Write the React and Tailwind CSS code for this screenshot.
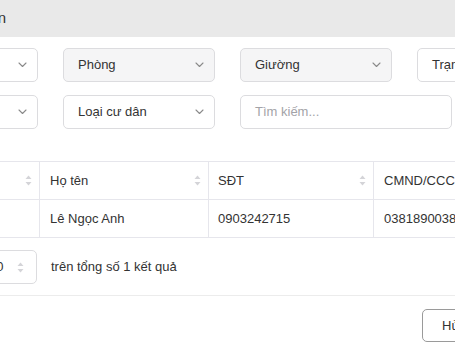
import React from 'react';

const font = { fontFamily: '"Liberation Sans", Arial, sans-serif' };

function Chevron() {
    return (
        <svg width="9" height="6" viewBox="0 0 9 6" fill="none" className="shrink-0">
            <path d="M1 1l3.5 3.5L8 1" stroke="#8a8a8a" strokeWidth="1.1" strokeLinecap="round" strokeLinejoin="round" />
        </svg>
    );
}

function SortIcon() {
    return (
        <svg width="7" height="11" viewBox="0 0 7 11" className="shrink-0">
            <path d="M3.5 0.5L6.5 4H0.5z" fill="#d4d4d8" />
            <path d="M3.5 10.5L6.5 7H0.5z" fill="#d4d4d8" />
        </svg>
    );
}

function Select({ label, disabled }) {
    return (
        <div className={`h-[34px] w-[152px] rounded-[5px] border border-[#dcdcdf] flex items-center justify-between pl-[14px] pr-[10px] text-[13px] text-[#333] ${disabled ? 'bg-[#f5f5f6]' : 'bg-white'}`}>
            <span className="whitespace-nowrap">{label}</span>
            <Chevron />
        </div>
    );
}

export default function App() {
    return (
        <div className="w-[455px] h-[356px] overflow-hidden bg-white relative" style={font}>
            {/* modal header */}
            <div className="h-[37px] bg-[#e9e9e9] flex items-center">
                <div className="-ml-[200px] w-[206px] text-right text-[15px] text-[#333] whitespace-nowrap">Danh sách cư dân</div>
            </div>

            {/* filters */}
            <div className="-ml-[114px] mt-[11px] grid grid-cols-[152px_152px_152px_152px] gap-x-[25px] gap-y-[13px]">
                <Select label="Tòa nhà" />
                <Select label="Phòng" disabled />
                <Select label="Giường" disabled />
                <Select label="Trạng thái" />
                <Select label="Giới tính" />
                <Select label="Loại cư dân" />
                <div className="h-[34px] w-[212px] rounded-[5px] border border-[#dcdcdf] flex items-center pl-[14px] text-[13px] text-[#a3a3a8] bg-white whitespace-nowrap">
                    Tìm kiếm...
                </div>
            </div>

            {/* table */}
            <div className="mt-[32px] w-[900px] -ml-[130px] border-t border-[#e6e6ec] text-[13px] text-[#333]">
                <div className="flex h-[38px] border-b border-[#e6e6ec]">
                    <div className="w-[170px] border-r border-[#e6e6ec] flex items-center justify-end pr-[7px]">
                        <SortIcon />
                    </div>
                    <div className="w-[169px] border-r border-[#e6e6ec] flex items-center justify-between pl-[10px] pr-[7px]">
                        <span>Họ tên</span>
                        <SortIcon />
                    </div>
                    <div className="w-[165px] border-r border-[#e6e6ec] flex items-center justify-between pl-[9px] pr-[7px]">
                        <span>SĐT</span>
                        <SortIcon />
                    </div>
                    <div className="flex-1 flex items-center pl-[10px]">
                        <span className="whitespace-nowrap">CMND/CCCD</span>
                    </div>
                </div>
                <div className="flex h-[38px] border-b border-[#e6e6ec]">
                    <div className="w-[170px] border-r border-[#e6e6ec]" />
                    <div className="w-[169px] border-r border-[#e6e6ec] flex items-center pl-[10px]">Lê Ngọc Anh</div>
                    <div className="w-[165px] border-r border-[#e6e6ec] flex items-center pl-[9px]">0903242715</div>
                    <div className="flex-1 flex items-center pl-[10px]">038189003821</div>
                </div>
            </div>

            {/* pagination */}
            <div className="mt-[12px] flex items-center -ml-[20px]">
                <div className="h-[34px] w-[57px] rounded-[5px] border border-[#dcdcdf] flex items-center justify-between pl-[8px] pr-[12px] text-[13px] text-[#333]">
                    <span>10</span>
                    <SortIcon />
                </div>
                <span className="ml-[14px] text-[13px] text-[#333] whitespace-nowrap">trên tổng số 1 kết quả</span>
            </div>

            {/* footer */}
            <div className="mt-[11px] border-t border-[#ececec] flex justify-start pl-[422px] pt-[13px]">
                <div className="h-[33px] rounded-[5px] border border-[#9a9a9a] flex items-center px-[19px] text-[13px] text-[#333] whitespace-nowrap">
                    Hủy bỏ
                </div>
            </div>
        </div>
    );
}
